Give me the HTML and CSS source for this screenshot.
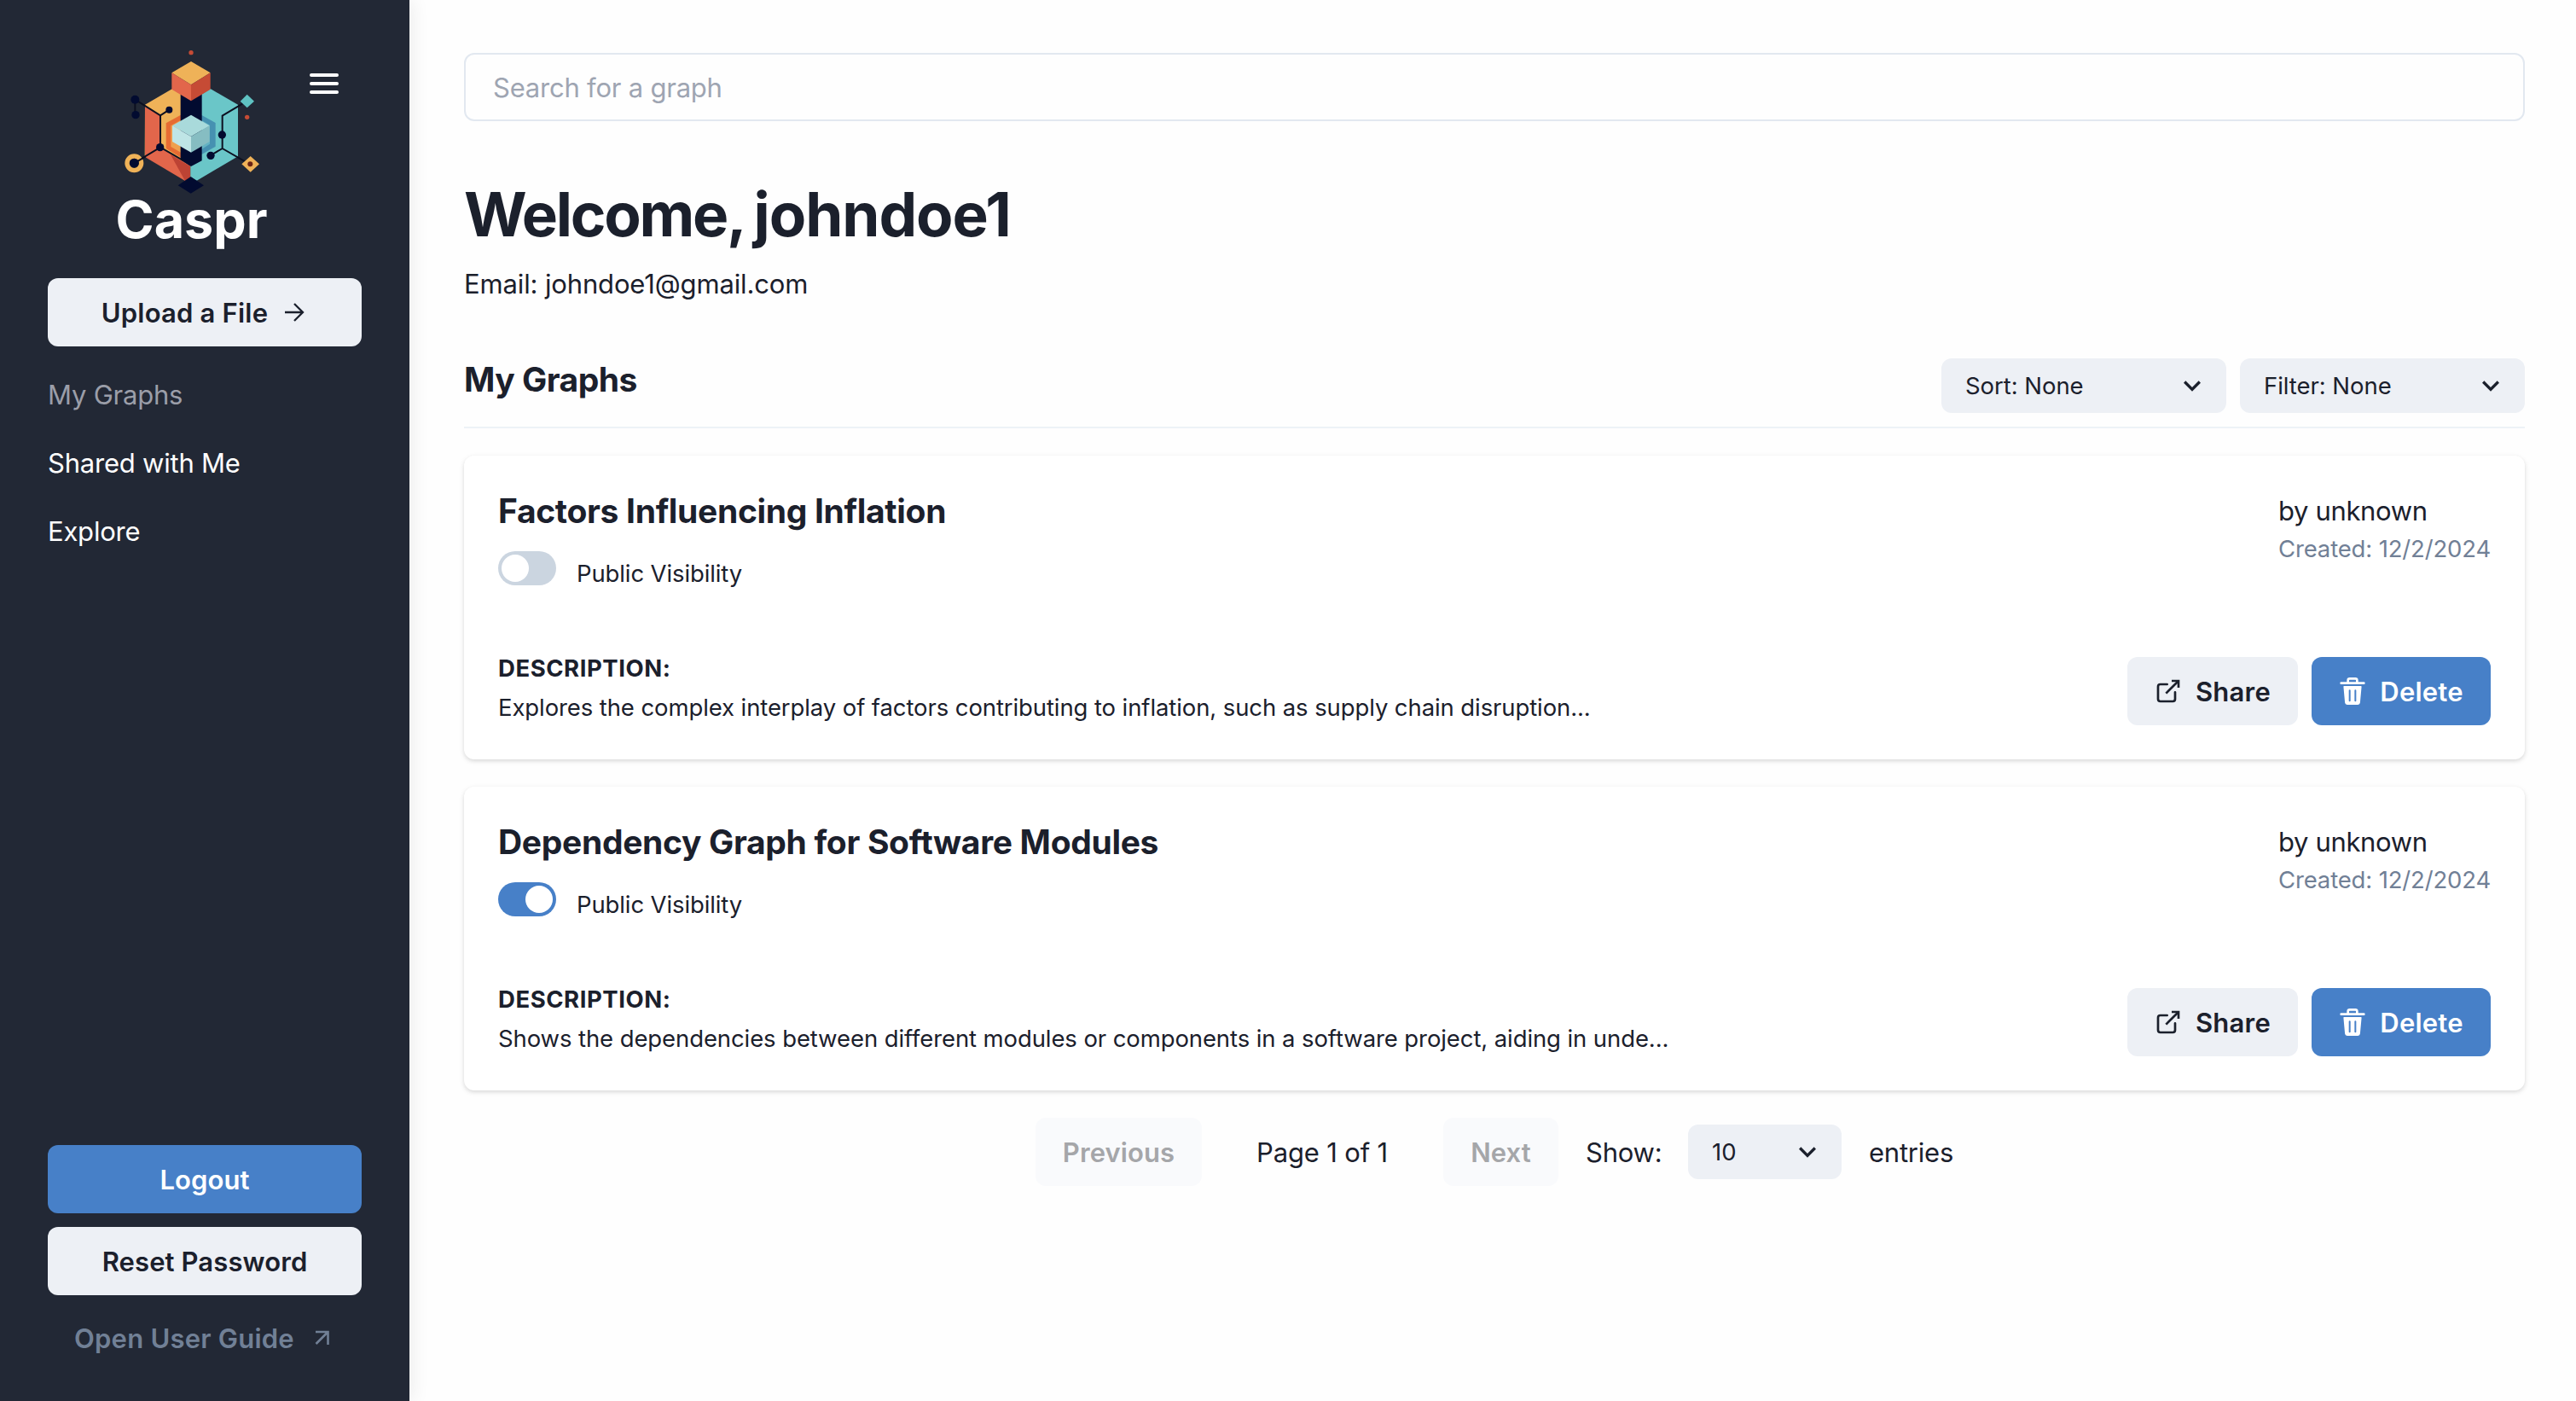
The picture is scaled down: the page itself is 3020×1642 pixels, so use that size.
FILE: index.html
```html
<!DOCTYPE html>
<html lang="en">
<head>
<meta charset="utf-8">
<title>Caspr</title>
<link rel="stylesheet" href="styles.css">
</head>
<body>
<svg class="sprite" aria-hidden="true">
  <symbol id="chevron" viewBox="0 0 24 24"><path fill="currentColor" d="M16.59 8.59L12 13.17 7.41 8.59 6 10l6 6 6-6z"/></symbol>
  <symbol id="share" viewBox="0 0 24 24"><g fill="none" stroke="currentColor" stroke-width="2"><path d="M15 3h6v6"/><path d="M10 14L21 3"/><path stroke-linecap="round" d="M18 13v6a2 2 0 0 1-2 2H5a2 2 0 0 1-2-2V8a2 2 0 0 1 2-2h6"/></g></symbol>
  <symbol id="trash" viewBox="0 0 24 24"><g fill="currentColor"><path d="M19.452 7.5H4.547a.5.5 0 0 0-.5.545l1.287 14.136A2 2 0 0 0 7.326 24h9.347a2 2 0 0 0 1.992-1.819L19.95 8.045a.5.5 0 0 0-.129-.382.5.5 0 0 0-.369-.163zm-9.2 13a.75.75 0 0 1-1.5 0v-9a.75.75 0 0 1 1.5 0zm5 0a.75.75 0 0 1-1.5 0v-9a.75.75 0 0 1 1.5 0zM22 4h-4.75a.25.25 0 0 1-.25-.25V2.5A2.5 2.5 0 0 0 14.5 0h-5A2.5 2.5 0 0 0 7 2.5v1.25a.25.25 0 0 1-.25.25H2a1 1 0 0 0 0 2h20a1 1 0 0 0 0-2zM9 3.75V2.5a.5.5 0 0 1 .5-.5h5a.5.5 0 0 1 .5.5v1.25a.25.25 0 0 1-.25.25h-5.500A.25.25 0 0 1 9 3.75z"/></g></symbol>
</svg>
<div class="app">
  <aside class="sidebar">
    <header class="brand">
      <svg class="logo" viewBox="0 0 220 270">
        <g transform="scale(.33333)">
          <path fill="#efb258" d="M150 248L245 193l32 18v232l-74-45-54 32z"/>
          <path fill="#e2664b" d="M150 250l54 36v112l-54 34z"/>
          <path fill="#e2664b" d="M150 432l54-34 106 66v51h-20z"/>
          <path fill="#bd4334" d="M240 424l70 42v44l-19 6z"/>
          <path fill="#6ac6c8" d="M348 212l32-20 97 56v182L332 515l-22-12v-40l38-20z"/>
          <path fill="#e66c33" d="M224 313l52-29v150l-52-32z"/>
          <path fill="#efa04e" d="M241 322l35-20v114l-35-20z"/>
          <path fill="#4691b1" d="M348 284l50 28v83l-50 29z"/>
          <path fill="#64b3c3" d="M348 302l30 18v66l-30 20z"/>
          <path fill="#020b30" d="M275 210l37 24 38-24v235l-38 20-37-24z"/>
          <path fill="#efb258" d="M312 96l68 40-68 42-68-42z"/>
          <path fill="#e2664b" d="M244 136l68 42v57l-68-41z"/>
          <path fill="#c64b35" d="M380 136l-68 42v57l68-41z"/>
          <path fill="#a9dadb" d="M312 284l65 38-65 38-66-38z"/>
          <path fill="#bfe5e6" d="M246 322l66 38v56l-66-38z"/>
          <path fill="#86bdc2" d="M377 322l-65 38v56l65-38z"/>
          <path fill="#020b30" d="M311 501l46 31-46 28-45-28z"/>
          <path fill="none" stroke="#0c1020" stroke-width="6" d="M115 230l89 56 31-20M204 286v112l-92 55M204 398l80 46M115 230v54M509 235l-87 52v115l-41 24M422 402l96 55"/>
          <circle cx="112" cy="454" r="25" fill="none" stroke="#efb258" stroke-width="16"/>
          <path stroke="#0c1020" stroke-width="6" d="M112 454l40-24"/>
          <g fill="#020b30"><circle cx="115" cy="230" r="15"/><circle cx="117" cy="284" r="14"/><circle cx="235" cy="266" r="12"/><circle cx="203" cy="398" r="14"/><circle cx="112" cy="453" r="16"/><circle cx="421" cy="354" r="14"/><circle cx="381" cy="427" r="14"/></g>
          <path fill="#5fc2c2" d="M509 212l25 24-25 23-24-23z"/>
          <path fill="#efb258" d="M521 429l31 28-31 28-31-28z"/>
          <circle cx="520" cy="457" r="9" fill="#6b2415"/>
          <g fill="#c64b35"><circle cx="312" cy="65" r="8"/><circle cx="509" cy="292" r="8"/></g>
        </g>
        <text class="wordmark" x="15.500" y="239" textLength="178" lengthAdjust="spacingAndGlyphs">Caspr</text>
      </svg>
      <svg class="menu" viewBox="0 0 36 28"><path d="M3 4h30M3 14h30M3 24h30" stroke="#fff" stroke-width="4" stroke-linecap="round"/></svg>
    </header>
    <button class="btn light upload"><span>Upload a File</span><svg class="arrow" viewBox="0 0 24 24"><path d="M1 12h21M12 2l10 10-10 10" fill="none" stroke="currentColor" stroke-width="2.300"/></svg></button>
    <nav class="nav">
      <a class="active">My Graphs</a>
      <a>Shared with Me</a>
      <a>Explore</a>
    </nav>
    <footer class="account">
      <button class="btn blue"><span>Logout</span></button>
      <button class="btn light"><span>Reset Password</span></button>
      <a class="guide"><span>Open User Guide</span><svg class="out" viewBox="0 0 18 18"><path d="M1 2h14.500v15M15 2.500L1.500 16" fill="none" stroke="currentColor" stroke-width="2.600"/></svg></a>
    </footer>
  </aside>
  <main class="main">
    <div class="search">Search for a graph</div>
    <h1><span class="greeting">Welcome,</span> johndoe1</h1>
    <p class="email">Email: johndoe1@gmail.com</p>
    <div class="section">
      <h2>My Graphs</h2>
      <div class="filters">
        <div class="select"><span>Sort: None</span><svg class="chev"><use href="#chevron"/></svg></div>
        <div class="select"><span>Filter: None</span><svg class="chev"><use href="#chevron"/></svg></div>
      </div>
    </div>
    <article class="card">
      <div class="top">
        <div>
          <h3>Factors Influencing Inflation</h3>
          <div class="visibility"><i class="switch"></i><span>Public Visibility</span></div>
        </div>
        <div class="meta"><span>by unknown</span><small>Created: 12/2/2024</small></div>
      </div>
      <div class="bottom">
        <div class="desc"><b>DESCRIPTION:</b><span>Explores the complex interplay of factors contributing to inflation, such as supply chain disruption...</span></div>
        <div class="actions">
          <button class="btn light share"><svg class="icon"><use href="#share"/></svg><span>Share</span></button>
          <button class="btn blue delete"><svg class="icon"><use href="#trash"/></svg><span>Delete</span></button>
        </div>
      </div>
    </article>
    <article class="card">
      <div class="top">
        <div>
          <h3>Dependency Graph for Software Modules</h3>
          <div class="visibility"><i class="switch on"></i><span>Public Visibility</span></div>
        </div>
        <div class="meta"><span>by unknown</span><small>Created: 12/2/2024</small></div>
      </div>
      <div class="bottom">
        <div class="desc"><b>DESCRIPTION:</b><span>Shows the dependencies between different modules or components in a software project, aiding in unde...</span></div>
        <div class="actions">
          <button class="btn light share"><svg class="icon"><use href="#share"/></svg><span>Share</span></button>
          <button class="btn blue delete"><svg class="icon"><use href="#trash"/></svg><span>Delete</span></button>
        </div>
      </div>
    </article>
    <div class="pager">
      <button class="btn disabled prev"><span>Previous</span></button>
      <span class="page">Page 1 of 1</span>
      <button class="btn disabled next"><span>Next</span></button>
      <span class="show">Show:</span>
      <div class="select count"><span>10</span><svg class="chev"><use href="#chevron"/></svg></div>
      <span class="entries">entries</span>
    </div>
  </main>
</div>
</body>
</html>
```
FILE: styles.css
```css
* { box-sizing: border-box; margin: 0; padding: 0; }
body { width: 3020px; height: 1642px; overflow: hidden; background: #fefefe; color: #1b202c; font-family: Inter, "Liberation Sans", sans-serif; font-size: 31px; line-height: 48px; letter-spacing: -.22px; white-space: nowrap; }
.sprite { display: none; }
.app { display: flex; height: 1642px; }

.sidebar { width: 480px; height: 1642px; padding: 40px 56px 0; background: #222835; color: #fff; display: flex; flex-direction: column; box-shadow: 4px 0 20px rgba(0,0,0,.07); }
.brand { display: flex; height: 286px; margin-left: 64px; margin-right: -10px; }
.logo { width: 220px; height: 270px; flex: none; }
.wordmark { font-family: Inter, sans-serif; font-weight: 700; font-size: 60px; letter-spacing: 0; fill: #fff; }
.menu { width: 36px; height: 28px; margin: 44px 0 0 22px; flex: none; }
.btn { height: 80px; border: 0; border-radius: 12px; font: 600 31px/48px Inter, sans-serif; letter-spacing: .1px; display: flex; align-items: center; justify-content: center; flex: none; }
.btn span { padding-top: 2px; }
.light { background: #edf0f5; color: #1b202c; }
.blue { background: #4780c8; color: #fff; }
.upload { gap: 19px; padding-right: 4px; letter-spacing: .2px; }
.arrow { width: 24px; height: 24px; }
.nav { margin-top: 33px; display: flex; flex-direction: column; gap: 32px; }
.nav .active { color: #9b9ea9; }
.account { margin-top: auto; padding-bottom: 40px; display: flex; flex-direction: column; gap: 16px; }
.guide { height: 68px; padding: 11px 0 9px 31px; display: flex; align-items: center; gap: 24px; font-weight: 600; color: #718096; letter-spacing: .22px; }
.guide svg { margin-bottom: 2px; }
.out { width: 18px; height: 18px; }

.main { flex: 1; padding: 62px 60px 0 64px; display: flex; flex-direction: column; }
.search { height: 80px; padding: 15px 32px; border: 2px solid #e2e8f0; border-radius: 12px; color: #9ea5b2; }
h1 { margin-top: 66px; height: 88px; font-size: 71px; line-height: 86px; font-weight: 700; letter-spacing: -1.1px; word-spacing: -5.500px; }
.greeting { letter-spacing: -2.300px; }
.email { height: 48px; margin-top: 13px; letter-spacing: -.14px; }
.section { height: 93px; margin-top: 52px; border-bottom: 2px solid #edf2f7; display: flex; justify-content: space-between; }
h2, h3 { font-size: 39px; line-height: 48px; font-weight: 700; letter-spacing: -.32px; }
.section h2 { margin-top: 12px; letter-spacing: -.5px; }
.filters { display: flex; gap: 16px; padding-top: 11px; }
.select { width: 334px; height: 64px; padding: 0 24px 0 28px; border-radius: 12px; background: #edf0f5; font-size: 27.500px; letter-spacing: -.05px; display: flex; align-items: center; justify-content: space-between; }
.chev { width: 40px; height: 40px; margin-right: -4px; }
.card { height: 356px; margin-top: 32px; padding: 40px; border-radius: 12px; background: #fff; box-shadow: 0 2px 6px rgba(0,0,0,.1), 0 2px 4px rgba(0,0,0,.06); display: flex; flex-direction: column; justify-content: space-between; }
.card h3 { padding-top: 1px; height: 48px; }
.top, .bottom { display: flex; justify-content: space-between; }
.visibility { display: flex; gap: 24px; margin-top: 24px; font-size: 27.500px; letter-spacing: -.12px; }
.visibility span { line-height: 52px; }
.switch { width: 68px; height: 40px; padding: 4px; border-radius: 20px; background: #cbd5e0; }
.switch::after { content: ""; display: block; width: 32px; height: 32px; border-radius: 50%; background: #fff; }
.switch.on { background: #4780c8; }
.switch.on::after { margin-left: 28px; }
.meta { width: 249px; display: flex; flex-direction: column; letter-spacing: -.35px; }
.meta span { height: 48px; padding-top: 1px; }
.meta small { font-size: 27.500px; line-height: 42px; color: #718096; letter-spacing: -.15px; }
.bottom { height: 80px; }
.desc { display: flex; flex-direction: column; gap: 4px; font-size: 27.500px; line-height: 42px; margin-top: -8px; letter-spacing: -.1px; }
.desc b { letter-spacing: .55px; }
.actions { display: flex; gap: 16px; }
.share { width: 200px; gap: 16px; letter-spacing: .25px; }
.delete { width: 210px; gap: 16px; letter-spacing: .2px; }
.icon { width: 32px; height: 32px; }
.pager { margin: 32px 0 0 670px; display: flex; align-items: center; }
.disabled { background: #f9fafc; color: #a5a6a9; }
.prev { width: 195px; }
.next { width: 135px; }
.page { width: 283px; padding: 2px 0 0 64px; letter-spacing: -.15px; }
.show { width: 152px; padding: 2px 0 0 32px; }
.count { width: 180px; margin-right: 32px; }
.entries { padding-top: 2px; }
```
